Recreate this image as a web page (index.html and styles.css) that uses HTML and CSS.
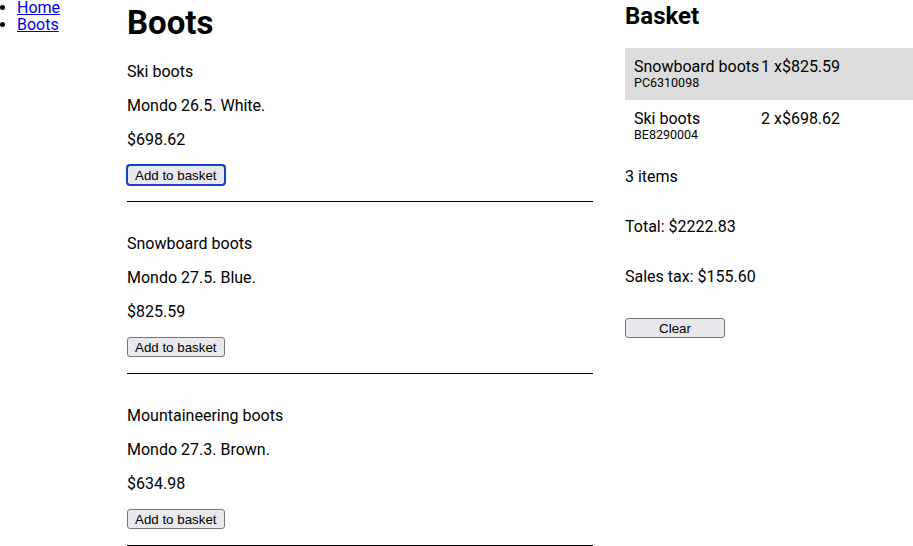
FILE: index.html
```html
<html>
<head>
	<title>Boots</title>
<link rel="stylesheet" href="styles.css">
</head>
<body>
<div class="page">

<ul class="nav">
	<li><a href="#">Home</a>
	<li><a href="#">Boots</a>
</ul>

<div class="products">
	<h1>Boots</h1>

	<div class="item">
		<p>Ski boots</p>
		<p>Mondo 26.5. White.</p>
		<p>$698.62</p>
		<button class="focused">Add to basket</button>
	</div>

	<div class="item">
		<p>Snowboard boots</p>
		<p>Mondo 27.5. Blue.</p>
		<p>$825.59</p>
		<button>Add to basket</button>
	</div>

	<div class="item">
		<p>Mountaineering boots</p>
		<p>Mondo 27.3. Brown.</p>
		<p>$634.98</p>
		<button>Add to basket</button>
	</div>
</div>

<div class="basket">
	<h2>Basket</h2>

	<div class="row hl">
		<div>Snowboard boots<div class="code">PC6310098</div></div>
		<div>1 x$825.59</div>
	</div>
	<div class="row">
		<div>Ski boots<div class="code">BE8290004</div></div>
		<div>2 x$698.62</div>
	</div>

	<p class="sum">3 items</p>
	<p class="sum">Total: $2222.83</p>
	<p class="sum">Sales tax: $155.60</p>

	<button class="clear">Clear</button>
</div>

</div>
</body>
</html>
```

FILE: styles.css
```css
BODY {margin:0; color:black; background-color:white; font-family: Roboto, "Liberation Sans", Arial, sans-serif; font-size:16px;}
.page {display:grid; grid-template-columns: 95px 466px 1fr; column-gap:32px;}
.nav {margin:-1px 0 0 0; padding-left:17px; line-height:17px;}
.nav A {color:#0000ee;}
H1 {font-size:33px; margin:3px 0 21px 0;}
H2 {font-size:24px; margin:0 0 16px 0; line-height:32px;}
P {margin:16px 0; line-height:18px;}
.item {border-bottom:1px solid black; padding-bottom:16px;}
.item + .item {padding-top:17px;}
.products H1 + .item P:first-child {margin-top:0;}
button {font-family: "Liberation Sans", Arial, sans-serif; font-size:13.33px; height:20px; background:#e9e9ed; border:1px solid #767676; border-radius:3px; padding:0 7px; color:black;}
button.focused {outline:2px solid #1a3fc7; outline-offset:-1px;}
.row {display:grid; grid-template-columns:127px 1fr; padding:10px 9px; line-height:18px;}
.row.hl {background:#dddddd;}
.code {font-size:12.5px; line-height:14px;}
.sum {margin:16px 0 32px 0;}
.clear {width:100px;}
```
